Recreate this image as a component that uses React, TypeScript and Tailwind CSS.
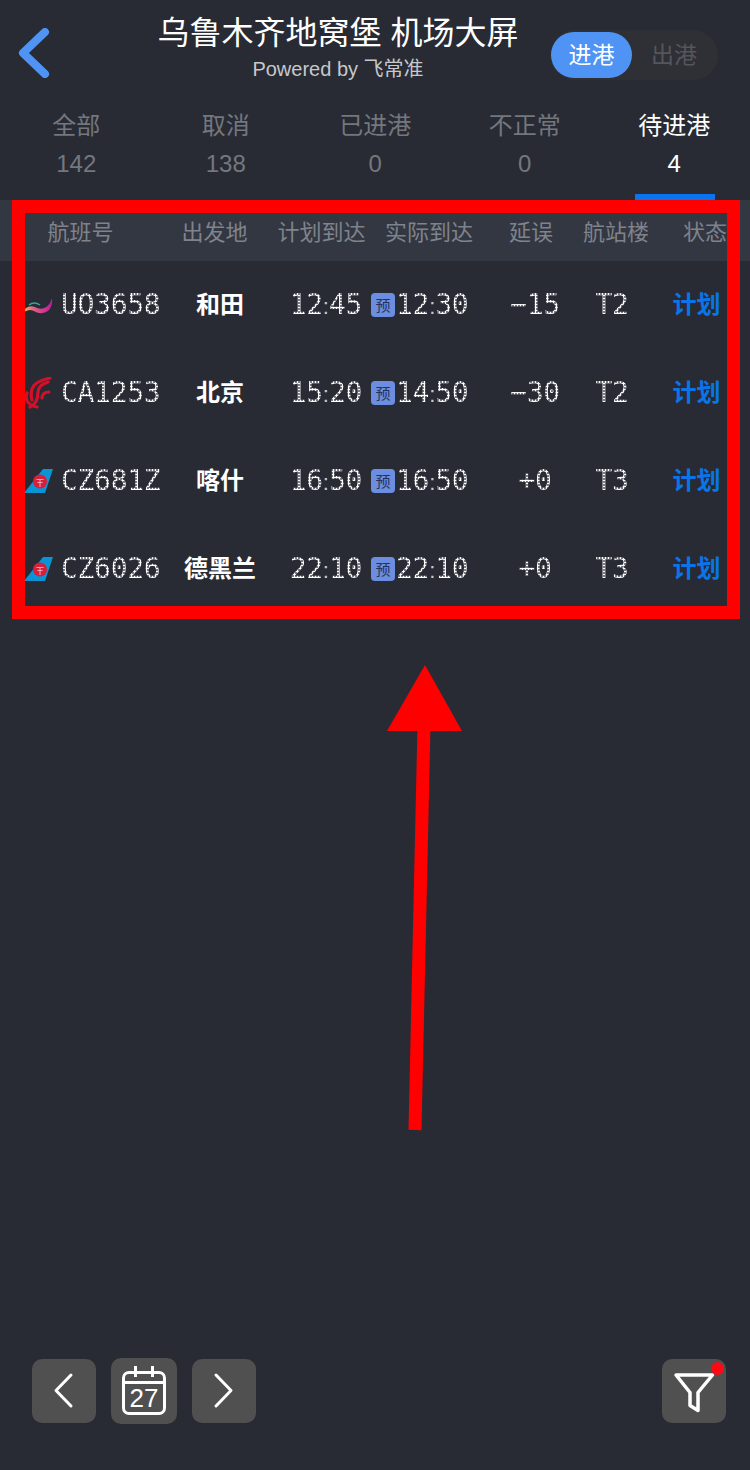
import React from "react";

const font = { fontFamily: '"Liberation Sans","Noto Sans CJK SC",sans-serif' };

const tabs = [
  ["全部", "142"],
  ["取消", "138"],
  ["已进港", "0"],
  ["不正常", "0"],
  ["待进港", "4"],
];

const Dot = ({ children }: { children: React.ReactNode }) => (
  <span className="font-['DejaVu_Sans_Mono',monospace] text-[28px] leading-none tracking-[-0.3px] whitespace-nowrap text-transparent bg-clip-text bg-[radial-gradient(circle,#ffffff_1px,rgba(235,235,235,0.38)_1.45px)] bg-[length:3px_3px]">
    {children}
  </span>
);

const Time = ({ t }: { t: string }) => {
  const [h, m] = t.split(":");
  return (
    <span className="whitespace-nowrap">
      <Dot>{h}</Dot>
      <span className="font-['Liberation_Sans',sans-serif] text-[22px] leading-none text-[#c9c9c9]">:</span>
      <Dot>{m}</Dot>
    </span>
  );
};

const Uo = () => (
  <svg width="29" height="20" viewBox="0 0 29 20" fill="none">
    <defs>
      <linearGradient id="uo" x1="0" y1="0" x2="1" y2="0">
        <stop offset="0" stopColor="#f0b93a" />
        <stop offset="0.35" stopColor="#e0608a" />
        <stop offset="1" stopColor="#c1189a" />
      </linearGradient>
    </defs>
    <path d="M0 15C5 10 9 11 13 13C19 15 25 13 28 3C29 10 26 17 19 18C13 19 10 15 6 15C4 15 2 16 0 17Z" fill="url(#uo)" />
    <path d="M5 10C9 7 13 8 16 10" stroke="#2fa7a0" strokeWidth="1.5" />
  </svg>
);

const Ca = () => (
  <svg width="29" height="32" viewBox="0 0 29 32" fill="none" stroke="#d3102a" strokeWidth="3.2" strokeLinecap="round">
    <path d="M26 1C17 3 10 6 8 12C7 16 7 20 8 23" />
    <path d="M24 5C18 7 14 10 14 15C14 21 13 27 6 30" />
    <path d="M25 15C21 15 18.5 16 18 21" />
    <path d="M3 16C1 22 3 28 13 30" />
  </svg>
);

const Cz = () => (
  <svg width="29" height="24" viewBox="0 0 29 24">
    <path d="M0 24L19 0H29L21 24Z" fill="#0a94d6" />
    <circle cx="16" cy="12.5" r="7" fill="#d81f3a" />
    <path d="M12.5 10.5H19.5M13.5 13.5H18.5M16 10V18" stroke="#f3a5b2" strokeWidth="1" />
  </svg>
);

const rows = [
  [<Uo />, "UO3658", "和田", "12:45", "12:30", "−15", "T2"],
  [<Ca />, "CA1253", "北京", "15:20", "14:50", "−30", "T2"],
  [<Cz />, "CZ681Z", "喀什", "16:50", "16:50", "+0", "T3"],
  [<Cz />, "CZ6026", "德黑兰", "22:10", "22:10", "+0", "T3"],
] as const;

const Btn = ({ children, className = "" }: { children: React.ReactNode; className?: string }) => (
  <div className={"w-[64px] h-[64px] rounded-[10px] bg-[#505050] flex items-center justify-center " + className}>{children}</div>
);

export default function App() {
  return (
    <div className="relative w-[750px] h-[1470px] overflow-hidden bg-[#282b34] flex flex-col" style={font}>
      {/* top bar */}
      <div className="h-[100px] flex items-start">
        <div className="w-[100px] pl-[18px] pt-[28px]">
          <svg width="32" height="50" viewBox="0 0 32 50" fill="none">
            <path d="M27 4L5 25L27 46" stroke="#4f94f5" strokeWidth="8" strokeLinecap="round" strokeLinejoin="round" />
          </svg>
        </div>
        <div className="w-[476px] flex flex-col items-center pt-[13px]">
          <div className="text-[32px] leading-[40px] text-white whitespace-nowrap">乌鲁木齐地窝堡 机场大屏</div>
          <div className="text-[20px] leading-[24px] mt-[4px] text-[#c6c8cc] whitespace-nowrap">Powered by 飞常准</div>
        </div>
        <div className="mt-[30px] -ml-[26px] w-[168px] h-[50px] rounded-[25px] bg-[#2f2f36] flex items-center pl-px">
          <div className="w-[81px] h-[46px] rounded-[23px] bg-[#4f94f5] text-white text-[23px] flex items-center justify-center">进港</div>
          <div className="w-[84px] text-[#55565c] text-[23px] text-center">出港</div>
        </div>
      </div>

      {/* tabs */}
      <div className="h-[100px] grid grid-cols-[repeat(5,149.5px)] pl-[1.5px]">
        {tabs.map(([a, b], i) => {
          const on = i === 4;
          return (
            <div key={a} className="flex flex-col items-center relative">
              <div className={"text-[24px] leading-[32px] mt-[10px] " + (on ? "text-white" : "text-[#74777e]")}>{a}</div>
              <div className={"text-[24px] leading-[32px] mt-[6px] " + (on ? "text-white" : "text-[#74777e]")}>{b}</div>
              {on && <div className="absolute bottom-0 w-[80px] h-[6px] ml-px bg-[#0a74f0]" />}
            </div>
          );
        })}
      </div>

      {/* table head */}
      <div className="h-[61px] bg-[#333742] grid grid-cols-[161px_107px_107px_108px_96px_74px_97px] pt-[17px] text-[22px] leading-[32px] text-[#7f838c] text-center whitespace-nowrap">
        <div>航班号</div>
        <div>出发地</div>
        <div>计划到达</div>
        <div>实际到达</div>
        <div>延误</div>
        <div>航站楼</div>
        <div className="text-left pl-[30px]">状态</div>
      </div>

      {/* rows */}
      <div>
        {rows.map((r) => (
          <div key={r[1]} className="h-[88px] pl-[24px] grid grid-cols-[37px_119px_80px_110px_120px_90px_64px_105px] items-center">
            <div className="flex items-center">{r[0]}</div>
            <div className="pt-[2px]"><Dot>{r[1]}</Dot></div>
            <div className="text-center text-[24px] font-bold text-white whitespace-nowrap">{r[2]}</div>
            <div className="text-right pr-[8px] pt-[2px]"><Time t={r[3]} /></div>
            <div className="flex items-center gap-[1px] pl-px">
              <span className="w-[24px] h-[24px] rounded-[4px] bg-[#6b8ee0] text-[#27325c] text-[15px] leading-none flex items-center justify-center">预</span>
              <div className="pt-[2px]"><Time t={r[4]} /></div>
            </div>
            <div className="text-center pt-[2px]"><Dot>{r[5]}</Dot></div>
            <div className="text-center pt-[2px]"><Dot>{r[6]}</Dot></div>
            <div className="text-center text-[24px] font-bold text-[#0a74e8]">计划</div>
          </div>
        ))}
      </div>

      {/* bottom tools */}
      <div className="mt-auto mb-[46px] pr-[24px] pl-[32px] flex items-center">
        <Btn>
          <svg width="64" height="64" viewBox="0 0 64 64" fill="none">
            <path d="M39 16L24 31.5L39 47" stroke="#fff" strokeWidth="3" strokeLinecap="round" strokeLinejoin="round" />
          </svg>
        </Btn>
        <div className="ml-[15px] w-[66px] h-[66px] rounded-[10px] bg-[#505050] flex items-center justify-center">
          <div className="relative w-[44px] h-[44px] mt-[3px] border-[3px] border-white rounded-[7px] flex flex-col">
            <div className="absolute -top-[8px] left-[9px] w-[3px] h-[11px] bg-white" />
            <div className="absolute -top-[8px] right-[9px] w-[3px] h-[11px] bg-white" />
            <div className="h-[7px] border-b-[3px] border-white box-content" />
            <div className="flex-1 flex items-center justify-center text-white text-[26px] leading-none">27</div>
          </div>
        </div>
        <Btn className="ml-[15px]">
          <svg width="64" height="64" viewBox="0 0 64 64" fill="none">
            <path d="M24 16L39 31.5L24 47" stroke="#fff" strokeWidth="3" strokeLinecap="round" strokeLinejoin="round" />
          </svg>
        </Btn>
        <div className="ml-auto relative">
          <Btn>
            <svg width="64" height="64" viewBox="0 0 64 64" fill="none">
              <path d="M14 16H50.5L36 33.5V51.5L28 46.5V33.5Z" stroke="#fff" strokeWidth="3.5" strokeLinejoin="round" />
            </svg>
          </Btn>
          <div className="absolute top-[3px] right-[2px] w-[13px] h-[13px] rounded-full bg-[#ff0a14]" />
        </div>
      </div>

      {/* annotation */}
      <div className="absolute left-[12px] top-[200px] w-[728px] h-[419px] border-[13px] border-[#ff0000]" />
      <svg className="absolute left-[380px] top-[660px]" width="90" height="480" viewBox="0 0 90 480">
        <path d="M45 5L7 71H82Z" fill="#ff0000" />
        <path d="M44 65L35 470" stroke="#ff0000" strokeWidth="13" />
      </svg>
    </div>
  );
}
